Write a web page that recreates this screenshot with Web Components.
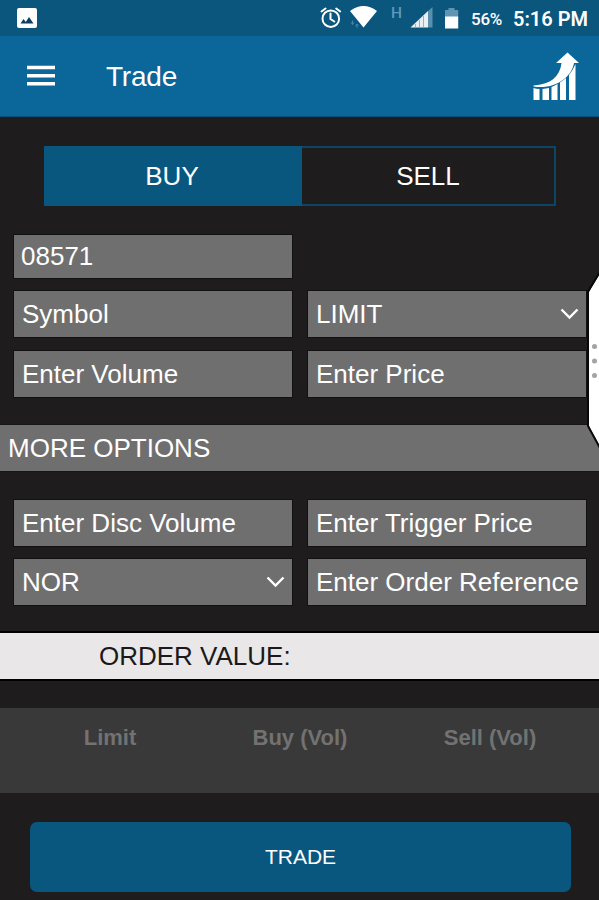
<!DOCTYPE html>
<html lang="en">
<head>
<meta charset="utf-8">
<title>Trade</title>
<style>
    body{
        margin: 0;
        width: 599px;
        height: 900px;
        overflow: hidden;
        background: #1e1c1d;
        color: #fff;
        font: 26px/30px "Liberation Sans", Arial, sans-serif;
    }
</style>
</head>
<body>
<trade-app></trade-app>

<script>
class StatusBar extends HTMLElement{
    constructor() {
        super();
        this.attachShadow({mode: 'open'});
        this.shadowRoot.innerHTML = `
        <style>
        :host{
            display: flex;
            align-items: center;
            height: 36px;
            box-sizing: border-box;
            padding: 0 11px 0 17px;
            background: #0a567c;
            font-family: Roboto, sans-serif;
        }
        svg{ display: block; }
        .photo{ margin-right: auto; }
        .percent{
            font-size: 17px;
            font-weight: 500;
            letter-spacing: -0.3px;
            margin: 2px 11px 0 10px;
        }
        .time{
            font-size: 20px;
            font-weight: 600;
            margin-top: 2px;
        }
        </style>
        <svg class="photo" width="20" height="20" viewBox="0 0 20 20">
            <rect width="20" height="20" rx="2" fill="#fff"/>
            <path d="M3.500 15.500l3-4.500 2.300 3 3.200-5 4.500 6.500z" fill="#0a3f62"/>
        </svg>
        <svg width="141" height="36" viewBox="320 0 141 36">
            <g fill="none" stroke="#fff" stroke-width="2" stroke-linecap="round">
                <circle cx="330.800" cy="18.700" r="8.300"/>
                <path d="M330.500 13.500v5.500l3.800 2.500M321.500 11.500l4-3M340.200 11.500l-4-3"/>
            </g>
            <path d="M350 11Q363.500 1 377 11L363.500 27.500z" fill="#fff"/>
            <path d="M352.500 20.500v4m-1.500-2l1.500 2 1.500-2M357 28v-4m-1.500 2l1.500-2 1.500 2" stroke="#3f86ad" fill="none"/>
            <text x="391" y="17.500" font-size="15.500" font-weight="500" fill="#5f9abb">H</text>
            <path d="M432.500 7v20.500h-5V11.500z" fill="#5790ae"/>
            <path d="M428 11v16.500h-17.500z" fill="#e9f0f4"/>
            <path d="M415.500 24v3.500M419.500 20v7.500M423.500 16v11.500" stroke="#8fb3c7"/>
            <path d="M445 10h3.500V8h6v2h3.700v7h-13.200z" fill="#5f95b2"/>
            <rect x="445" y="16.500" width="13.200" height="12" fill="#fff"/>
        </svg>
        <span class="percent">56%</span>
        <span class="time">5:16 PM</span>
      `;
    }
}
window.customElements.define('status-bar', StatusBar);


class AppHeader extends HTMLElement{
    constructor() {
        super();
        this.attachShadow({mode: 'open'});
        this.shadowRoot.innerHTML = `
        <style>
        :host{
            display: flex;
            align-items: center;
            height: 81px;
            box-sizing: border-box;
            padding: 0 20px 0 27px;
            background: #0b6799;
            border-bottom: 1px solid #0b507a;
        }
        svg{ display: block; }
        .title{
            flex: 1;
            margin: 2px 0 0 51px;
            font-size: 28px;
            letter-spacing: -0.2px;
        }
        </style>
        <svg width="28" height="22" viewBox="0 0 28 22">
            <path d="M0 2.500h28M0 10.800h28M0 18.800h28" stroke="#fff" stroke-width="3.600"/>
        </svg>
        <span class="title"><slot></slot></span>
        <svg width="47" height="50" viewBox="532 51 47 50">
            <path d="M533.500 88q2.500 1 6 1v11h-6zM542.500 89q3.500-.3 6.500-1v12h-6.500zM551.500 87q3.500-1.300 6-3v16h-6zM560 82.500q3-2 6-4.500v22h-6zM569 75q4-5 6.500-11v36H569z" fill="#fff"/>
            <path d="M533.500 85.500C550 84.500 560 77 561.500 63h-5.500L567.500 52.500 579 63h-5C572 77 555 90 533.500 86.500z" fill="#fff"/>
        </svg>
      `;
    }
}
window.customElements.define('app-header', AppHeader);


class SideToggle extends HTMLElement{
    constructor() {
        super();
        this.attachShadow({mode: 'open'});
        this.shadowRoot.innerHTML = `
        <style>
        :host{
            display: flex;
            height: 60px;
            box-sizing: border-box;
            border: 2px solid #0c4666;
            border-left: 0;
            margin: 0 43px 0 44px;
        }
        div{
            flex: 1;
            display: flex;
            align-items: center;
            justify-content: center;
        }
        .active{
            flex: none;
            width: 258px;
            margin: -2px 0;
            background: #09577f;
            box-sizing: border-box;
            padding-right: 2px;
        }
        </style>
        <div class="active"><slot name="buy"></slot></div>
        <div><slot name="sell"></slot></div>
      `;
    }
}
window.customElements.define('side-toggle', SideToggle);


class TradeField extends HTMLElement{
    constructor() {
        super();
        this.attachShadow({mode: 'open'});
        this.shadowRoot.innerHTML = `
        <style>
        :host{
            display: flex;
            align-items: center;
            justify-content: space-between;
            height: 46px;
            box-sizing: border-box;
            padding: 0 7px 0 8px;
            background: #6f6f6f;
            box-shadow: 0 0 0 1px #111;
            white-space: nowrap;
        }
        :host([short]){
            height: 43px;
            padding-left: 7px;
        }
        svg{ display: none; }
        :host([select]) svg{ display: block; }
        </style>
        <span><slot></slot></span>
        <svg width="19" height="12" viewBox="0 0 19 12">
            <path d="M1.500 1.500l8 8 8-8" fill="none" stroke="#fff" stroke-width="2.400"/>
        </svg>
      `;
    }
}
window.customElements.define('trade-field', TradeField);


class FieldGrid extends HTMLElement{
    constructor() {
        super();
        this.attachShadow({mode: 'open'});
        this.shadowRoot.innerHTML = `
        <style>
        :host{
            display: grid;
            grid-template-columns: 278px 278px;
            gap: 13.500px 16px;
            margin-left: 14px;
        }
        </style>
        <slot></slot>
      `;
    }
}
window.customElements.define('field-grid', FieldGrid);


class SectionBar extends HTMLElement{
    constructor() {
        super();
        this.attachShadow({mode: 'open'});
        this.shadowRoot.innerHTML = `
        <style>
        :host{
            display: flex;
            align-items: center;
            height: 46px;
            padding-left: 8px;
            background: #6f6f6f;
            box-shadow: 0 0 0 1px #161415;
        }
        :host([light]){
            margin: -1px 0 1px;
            padding-left: 99px;
            background: #e9e7e8;
            color: #1b191a;
            box-shadow: 0 0 0 2px #000;
        }
        </style>
        <slot></slot>
      `;
    }
}
window.customElements.define('section-bar', SectionBar);


class DepthHead extends HTMLElement{
    constructor() {
        super();
        this.attachShadow({mode: 'open'});
        const columns = this.getAttribute('columns').split(',');
        this.shadowRoot.innerHTML = `
        <style>
        :host{
            display: flex;
            height: 85px;
            box-sizing: border-box;
            padding: 15px 14px 0 15px;
            background: #393939;
            color: #727272;
            font-size: 22px;
            font-weight: bold;
        }
        span{
            flex: 1;
            text-align: center;
        }
        </style>
        ${columns.map(item => `<span>${item}</span>`).join('')}
      `;
    }
}
window.customElements.define('depth-head', DepthHead);


class TradeButton extends HTMLElement{
    constructor() {
        super();
        this.attachShadow({mode: 'open'});
        this.shadowRoot.innerHTML = `
        <style>
        :host{
            display: flex;
            align-items: center;
            justify-content: center;
            height: 70px;
            margin: 0 28px 0 30px;
            border-radius: 7px;
            background: #09577f;
            font-size: 21px;
        }
        </style>
        <slot></slot>
      `;
    }
}
window.customElements.define('trade-button', TradeButton);


// pull-out handle that lies over the right edge of the form
class EdgeHandle extends HTMLElement{
    constructor() {
        super();
        this.attachShadow({mode: 'open'});
        this.shadowRoot.innerHTML = `
        <style>
        :host{
            display: block;
            position: absolute;
            top: 270px;
            right: 0;
        }
        svg{ display: block; }
        </style>
        <svg width="13" height="180" viewBox="586 270 13 180">
            <path d="M600 273L589 292V426L600 449z" fill="#fff"/>
            <path d="M600 272L588 291.500V426L600 448" fill="none" stroke="#080808" stroke-width="2"/>
            <g fill="#a3a3a3">
                <circle cx="594.500" cy="346.500" r="2.500"/>
                <circle cx="594.500" cy="361" r="2.500"/>
                <circle cx="594.500" cy="375.500" r="2.500"/>
            </g>
        </svg>
      `;
    }
}
window.customElements.define('edge-handle', EdgeHandle);


class TradeApp extends HTMLElement{
    constructor() {
        super();
        this.attachShadow({mode: 'open'});
        this.shadowRoot.innerHTML = `
        <style>
        :host{
            display: block;
            position: relative;
            width: 599px;
            height: 900px;
            overflow: hidden;
        }
        main{
            display: flex;
            flex-direction: column;
            gap: 28.500px;
            padding-top: 29px;
        }
        .symbol{ grid-column-start: 1; }
        </style>
        <status-bar></status-bar>
        <app-header>Trade</app-header>
        <main>
            <side-toggle>
                <span slot="buy">BUY</span>
                <span slot="sell">SELL</span>
            </side-toggle>
            <field-grid>
                <trade-field short>08571</trade-field>
                <trade-field class="symbol">Symbol</trade-field>
                <trade-field select>LIMIT</trade-field>
                <trade-field>Enter Volume</trade-field>
                <trade-field>Enter Price</trade-field>
            </field-grid>
            <section-bar>MORE OPTIONS</section-bar>
            <field-grid>
                <trade-field>Enter Disc Volume</trade-field>
                <trade-field>Enter Trigger Price</trade-field>
                <trade-field select>NOR</trade-field>
                <trade-field>Enter Order Reference</trade-field>
            </field-grid>
            <section-bar light>ORDER VALUE:</section-bar>
            <depth-head columns="Limit,Buy (Vol),Sell (Vol)"></depth-head>
            <trade-button>TRADE</trade-button>
        </main>
        <edge-handle></edge-handle>
      `;
    }
}
window.customElements.define('trade-app', TradeApp);
</script>
</body>
</html>
